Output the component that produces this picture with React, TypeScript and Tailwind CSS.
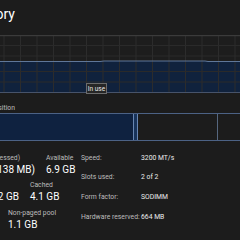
import React from "react";

const vLines = Array.from({ length: 15 }, (_, i) => 4 + i * 16.5);
const hLines = [10.5, 21, 36.5, 47];

function Graph() {
  return (
    <div className="relative h-[58px] w-[240px]">
      <svg width="240" height="58" viewBox="0 0 240 58" className="block">
        <rect x="0" y="0" width="240" height="58" fill="#1d1d1d" />
        <rect x="0" y="26" width="240" height="31" fill="#10223d" />
        {vLines.map((x) => (
          <line key={x} x1={x} y1="1" x2={x} y2="57" stroke="#2c2c2c" strokeWidth="1" />
        ))}
        {hLines.map((y) => (
          <line key={y} x1="0" y1={y} x2="240" y2={y} stroke="#2a2a2a" strokeWidth="1" />
        ))}
        <line x1="0" y1="0.5" x2="240" y2="0.5" stroke="#3b3b3b" strokeWidth="1.5" />
        <polyline points="0,26.5 100,26.5 104,26 205,26 208,26.5 240,26.5" fill="none" stroke="#5f7799" strokeWidth="1" />
        <line x1="0" y1="57.5" x2="240" y2="57.5" stroke="#47536a" strokeWidth="1" />
      </svg>
      <div className="absolute left-[86px] top-[48px] flex h-[11px] w-[21px] items-center justify-center border border-[#6c6c6c] bg-[#262626] text-[6.5px] leading-[6px] text-[#e8e8e8]">
        In use
      </div>
    </div>
  );
}

function Clip({ w, children, className }: { w: number; children: React.ReactNode; className: string }) {
  return (
    <div className="flex justify-end" style={{ width: w }}>
      <span className={"whitespace-nowrap " + className}>{children}</span>
    </div>
  );
}

export default function App() {
  const label = "text-[6.8px] leading-[10px] text-[#bdbdbd]";
  const value = "text-[10px] leading-[14px] text-white";
  return (
    <div className="h-[240px] w-[240px] overflow-hidden bg-[#1c1c1c] font-['Segoe_UI',Roboto,sans-serif] text-white">
      <div className="h-[35px] pt-[5px]">
        <div className="flex w-[15px] justify-end">
          <span className="whitespace-nowrap text-[14px] leading-[18px]">Memory</span>
        </div>
      </div>
      <Graph />
      <div className="h-[20px] pt-[10px]">
        <div className="flex w-[15px] justify-end">
          <span className={"whitespace-nowrap " + label}>Memory composition</span>
        </div>
      </div>
      <div className="flex h-[28px] border-y border-[#4c6285]">
        <div className="w-[133px] bg-[#0f2240]" />
        <div className="w-[5px] border-x border-[#6987b2] bg-[#18335a]" />
        <div className="w-[80px] border-r border-[#56677f]" />
        <div className="flex-1" />
      </div>
      <div className="flex pt-[11.5px]">
        <div className="flex w-[81px] flex-col gap-[3.5px]">
          <div className="flex gap-[11px]">
            <div className="flex flex-col">
              <Clip w={20} className={label}>In use (Compressed)</Clip>
              <Clip w={35} className={value}>7.7 GB (138 MB)</Clip>
            </div>
            <div className="flex flex-col">
              <span className={label}>Available</span>
              <span className={value}>6.9 GB</span>
            </div>
          </div>
          <div className="flex gap-[11px]">
            <div className="flex flex-col">
              <Clip w={19} className={label + " invisible"}>Committed</Clip>
              <Clip w={19} className={value}>9.8/17.2 GB</Clip>
            </div>
            <div className="flex flex-col">
              <span className={label}>Cached</span>
              <span className={value}>4.1 GB</span>
            </div>
          </div>
          <div className="flex pl-[8px]">
            <div className="flex flex-col">
              <span className={label}>Non-paged pool</span>
              <span className={value}>1.1 GB</span>
            </div>
          </div>
        </div>
        <div className="grid grid-cols-[60px_auto] text-[6.8px] leading-[10px]">
          <span className="whitespace-nowrap text-[#bdbdbd]">Speed:</span>
          <span className="whitespace-nowrap text-[#ececec]">3200 MT/s</span>
          <span className="whitespace-nowrap text-[#bdbdbd]">Slots used:</span>
          <span className="whitespace-nowrap text-[#ececec]">2 of 2</span>
          <span className="whitespace-nowrap text-[#bdbdbd]">Form factor:</span>
          <span className="whitespace-nowrap text-[#ececec]">SODIMM</span>
          <span className="whitespace-nowrap text-[#bdbdbd]">Hardware reserved:</span>
          <span className="whitespace-nowrap text-[#ececec]">664 MB</span>
        </div>
      </div>
    </div>
  );
}
